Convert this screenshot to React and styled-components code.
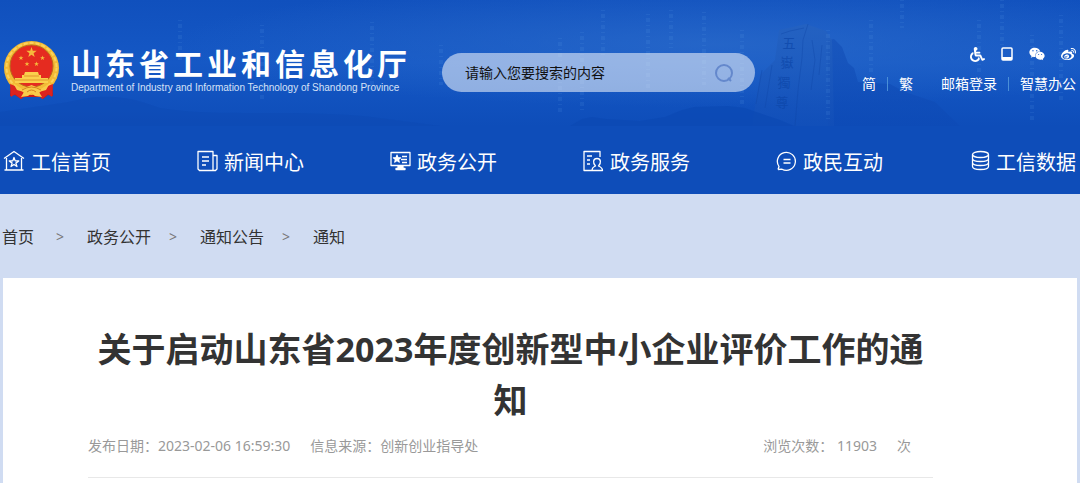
import React from "react";
import styled, { createGlobalStyle } from "styled-components";
import { FaWheelchair, FaWeixin, FaWeibo } from "react-icons/fa";

const GlobalStyle = createGlobalStyle`
  * { box-sizing: border-box; }
  body {
    margin: 0;
    background: #d0dcf2;
    color: #333;
    font-family: "Noto Sans", "Noto Sans CJK SC", sans-serif;
  }
  a { color: inherit; text-decoration: none; }
`;

const Header = styled.header`
  position: relative;
  background: #0e4db9;
  color: #fff;
`;

const Scene = styled.svg`
  position: absolute;
  top: 0;
  left: 0;
  width: 100%;
  height: 126px;
`;

const Masthead = styled.div`
  position: relative;
  display: flex;
  align-items: flex-start;
  height: 126px;
  padding: 40px 4px 0 3px;
`;

const Brand = styled.a`
  display: flex;
  gap: 11px;
`;

const Emblem = styled.svg`
  width: 57px;
  height: 61px;
`;

const BrandText = styled.div`
  padding-top: 7px;
  white-space: nowrap;
`;

const SiteName = styled.div`
  font-size: 30px;
  line-height: 34px;
  font-weight: 700;
  letter-spacing: 4px;
`;

const SiteNameEn = styled.div`
  font-family: "Liberation Sans", sans-serif;
  font-size: 10px;
  line-height: 14px;
  color: #d6e2f7;
`;

const Search = styled.form`
  display: flex;
  align-items: center;
  width: 313px;
  height: 39px;
  margin: 13px 0 0 31px;
  padding: 0 20px 0 23px;
  border-radius: 20px;
  background: rgba(255, 255, 255, 0.53);
`;

const SearchInput = styled.input`
  flex: 1;
  min-width: 0;
  padding: 0;
  border: 0;
  outline: 0;
  background: transparent;
  font: 14px/20px "Noto Sans", "Noto Sans CJK SC", sans-serif;
  &::placeholder { color: #111; opacity: 1; }
`;

const SearchButton = styled.button`
  display: flex;
  padding: 0;
  border: 0;
  background: none;
  color: #6488cc;
`;

const Tools = styled.div`
  display: flex;
  flex-direction: column;
  align-items: flex-end;
  gap: 11px;
  margin-left: auto;
  padding-top: 5px;
`;

const IconLinks = styled.div`
  display: flex;
  align-items: center;
  gap: 16px;
  height: 18px;
  a { display: flex; }
`;

const TextLinks = styled.div`
  display: flex;
  align-items: center;
  font-size: 14px;
  line-height: 20px;
  white-space: nowrap;
`;

const Divider = styled.span`
  width: 1px;
  height: 14px;
  margin: 0 11px;
  background: #4a8fd8;
`;

const LinkGroup = styled.div`
  display: flex;
  align-items: center;
  & + & { margin-left: 28px; }
`;

const Nav = styled.nav`
  position: relative;
  display: flex;
  justify-content: space-between;
  height: 68px;
  padding: 0 4px 0 3px;
`;

const NavItem = styled.a`
  display: flex;
  align-items: center;
  gap: 6px;
  height: 70px;
  font-size: 20px;
  white-space: nowrap;
`;

const Crumbs = styled.nav`
  display: flex;
  align-items: center;
  height: 84px;
  padding-left: 2px;
  font-size: 16px;
`;

const CrumbMark = styled.span`
  width: 49px;
  padding-left: 18px;
  font-size: 14px;
  color: #777;
  &:first-of-type { margin-left: 4px; }
`;

const Article = styled.main`
  min-height: 205px;
  margin: 0 3px;
  padding: 46px 144px 0 85px;
  background: #fff;
`;

const Title = styled.h1`
  margin: 0;
  font-size: 34px;
  line-height: 51px;
  font-weight: 700;
  text-align: center;
`;

const Meta = styled.div`
  display: flex;
  gap: 20px;
  padding: 9px 22px 20px 0;
  border-bottom: 1px solid #e8e8e8;
  font-size: 14px;
  line-height: 22px;
  color: #999;
`;

const Views = styled.span`
  display: flex;
  gap: 20px;
  margin-left: auto;
`;

const star = (cx, cy, r) =>
  Array.from({ length: 10 }, (_, i) => {
    const a = (Math.PI / 5) * i - Math.PI / 2;
    const q = i % 2 ? r * 0.4 : r;
    return (cx + q * Math.cos(a)).toFixed(2) + "," + (cy + q * Math.sin(a)).toFixed(2);
  }).join(" ");

const streams = [
  [180, 20, 60], [262, 25, 100], [372, 22, 90], [441, 45, 85], [560, 38, 112], [582, 32, 112],
  [603, 10, 55], [648, 14, 90], [671, 10, 48], [704, 12, 85], [742, 30, 105], [828, 30, 122],
  [871, 20, 75], [902, 0, 28], [979, 20, 75], [1002, 0, 45], [1032, 35, 122], [1061, 15, 100],
];

function HeaderScene() {
  return (
    <Scene viewBox="0 0 1080 126" preserveAspectRatio="xMidYMin slice" aria-hidden="true">
      <defs>
        <linearGradient id="sky" x1="0" y1="0" x2="0" y2="1">
          <stop offset="0" stopColor="#1050bd" />
          <stop offset="0.5" stopColor="#1558c5" />
          <stop offset="1" stopColor="#0e4db9" />
        </linearGradient>
        <radialGradient id="glow" cx="0.66" cy="0.35" r="0.5">
          <stop offset="0" stopColor="#2a6aca" stopOpacity="0.75" />
          <stop offset="1" stopColor="#2a6aca" stopOpacity="0" />
        </radialGradient>
        <linearGradient id="rock" x1="0" y1="0" x2="0" y2="1">
          <stop offset="0" stopColor="#2562c0" stopOpacity="0.8" />
          <stop offset="1" stopColor="#1350b9" stopOpacity="0.6" />
        </linearGradient>
        <linearGradient id="cliff" x1="0" y1="0" x2="0" y2="1">
          <stop offset="0" stopColor="#1551b9" />
          <stop offset="1" stopColor="#0d4ab6" />
        </linearGradient>
      </defs>
      <rect width="1080" height="126" fill="url(#sky)" />
      <rect width="1080" height="126" fill="url(#glow)" />
      <path d="M0 112C40 106 60 104 88 98C120 94 138 100 160 108C220 118 300 108 380 118L440 126H0Z" fill="#0c48b2" opacity="0.4" />
      <path d="M828 126V40L834 39L842 47L848 63L854 68L858 82L890 84L905 92L935 102L960 126Z" fill="url(#cliff)" opacity="0.7" />
      <path d="M752 126L760 75L775 60L779 30L806 24L826 31L832 40L834 126Z" fill="url(#rock)" />
      <path d="M808 24L803 40L802 58L798 90L795 126M781 34L790 31L804 28M772 65L765 108M762 70L756 104M812 40L815 60L811 90M822 45L819 75" fill="none" stroke="#0e47a8" strokeWidth="1" opacity="0.4" />
      <g fill="#0c46a9" opacity="0.7" fontFamily="Noto Sans CJK TC, sans-serif" fontSize="13" textAnchor="middle">
        <text x="789" y="48">五</text>
        <text x="787" y="67">嶽</text>
        <text x="784" y="87">獨</text>
        <text x="782" y="107">尊</text>
      </g>
      <path d="M570 126L582 119L592 117L606 119L640 121L665 117L682 110L694 107L728 106L745 108L762 114L780 120L794 126Z" fill="#0b49b3" opacity="0.7" />
      <g fill="none" stroke="#5a9be6" strokeWidth="4" strokeDasharray="1 3 4 3" opacity="0.14">
        {streams.map(([x, a, b]) => <path key={x} d={"M" + x + " " + a + "V" + b} />)}
      </g>
    </Scene>
  );
}

function NationalEmblem() {
  return (
    <Emblem viewBox="0 0 57 61" aria-hidden="true">
      <path d="M8 42L7 56L12 55L18 59L21 57H37L40 59L45 55L50 56L49 42Z" fill="#c81a18" />
      <ellipse cx="28.500" cy="28" rx="27.500" ry="27" fill="#f3ba35" />
      <ellipse cx="28.500" cy="27.500" rx="25" ry="24.500" fill="none" stroke="#fbd25c" strokeWidth="2" strokeDasharray="4 2" />
      <ellipse cx="28.500" cy="26" rx="21.500" ry="21" fill="#e52b20" stroke="#b96b1c" strokeWidth="1" />
      <g fill="#f6b93c">
        <polygon points={star(28.5, 12.5, 5.5)} />
        <polygon points={star(18, 18, 2.6)} />
        <polygon points={star(39.5, 18, 2.6)} />
        <polygon points={star(24, 24, 2.6)} />
        <polygon points={star(33.5, 24, 2.6)} />
      </g>
      <path d="M22 32H35L36 35H38V38H45V43H12V38H19V35H21Z" fill="#fad04c" />
      <path d="M21 36H36M12 40H45" stroke="#e0962a" strokeWidth="1" />
      <path d="M7 44L8 57L12 54L18 59L22 54L15 47ZM50 44L49 57L45 54L39 59L35 54L42 47Z" fill="#dc231e" />
      <path d="M10 43L19 49L28.500 45L38 49L47 43L43 50L36 52L39 57L32 56L28.500 53L25 56L18 57L21 52L14 50Z" fill="#f8cb4a" />
      <path d="M19 50Q28.500 44 38 50M24 52Q28.500 48 33 52" fill="none" stroke="#d6811f" strokeWidth="1" />
    </Emblem>
  );
}

const navIcons = {
  home: (
    <>
      <path d="M1 8.500L11 1.500L21 8.500M3.500 8V20M18.500 8V20M1.500 20H20.500" />
      <polygon points={star(11, 12.5, 5)} />
    </>
  ),
  news: <path d="M2 1.500H17V20.500H3.500L2 19ZM17 5.500H21V19L19.500 20.500H17M6 7H13M6 11H13M6 15H10" />,
  open: (
    <>
      <path d="M2 2.500H21V15.500H2ZM13 6.500H18M12 9.500H18M13 12.500H18" />
      <polygon points={star(8, 9, 3.8)} fill="currentColor" />
      <path d="M9 16.500H14V18.500H16V19.500H7V18.500H9Z" fill="currentColor" />
    </>
  ),
  service: <path d="M18 7V1.500H2V20.500H10M5 6H10M5 10H8M5 14H8M13.500 16C10.500 13 11 8.500 15 8.500S19.500 13 16.500 16C19 17 20.500 18 20.500 20.500H10C10 18 11 17 13.500 16Z" />,
  chat: <path d="M3 19.500L4 16.500A9 9 0 1 1 7 19.200L3 19.500M8.500 9.500H15.500M8.500 13H15.500" />,
  data: (
    <>
      <ellipse cx="12.500" cy="4.500" rx="8" ry="3" />
      <path d="M4.500 4.500V16.500C4.500 20.500 20.500 20.500 20.500 16.500V4.500M4.500 8.500C4.500 12.500 20.500 12.500 20.500 8.500M4.500 12.500C4.500 16.500 20.500 16.500 20.500 12.500" />
    </>
  ),
};

const navItems = [
  ["home", "工信首页"],
  ["news", "新闻中心"],
  ["open", "政务公开"],
  ["service", "政务服务"],
  ["chat", "政民互动"],
  ["data", "工信数据"],
];

const crumbs = ["首页", "政务公开", "通知公告", "通知"];

export default function App() {
  return (
    <>
      <GlobalStyle />
      <Header>
        <HeaderScene />
        <Masthead>
          <Brand href="#">
            <NationalEmblem />
            <BrandText>
              <SiteName>山东省工业和信息化厅</SiteName>
              <SiteNameEn>Department of Industry and Information Technology of Shandong Province</SiteNameEn>
            </BrandText>
          </Brand>
          <Search role="search">
            <SearchInput type="text" aria-label="搜索" placeholder="请输入您要搜索的内容" />
            <SearchButton type="button" aria-label="搜索">
              <svg width="22" height="22" viewBox="0 0 22 22" fill="none" stroke="currentColor" strokeWidth="2">
                <circle cx="11" cy="11" r="8" />
                <path d="M15 16L18 19" />
              </svg>
            </SearchButton>
          </Search>
          <Tools>
            <IconLinks>
              <a href="#" aria-label="无障碍"><FaWheelchair size={15} /></a>
              <a href="#" aria-label="移动版">
                <svg width="12" height="14" viewBox="0 0 12 14" fill="none" stroke="currentColor">
                  <rect x="1" y="1" width="10" height="12" rx="1" strokeWidth="1.500" />
                  <path d="M1 11.500H11" strokeWidth="3" />
                </svg>
              </a>
              <a href="#" aria-label="微信"><FaWeixin size={16} /></a>
              <a href="#" aria-label="微博"><FaWeibo size={15} /></a>
            </IconLinks>
            <TextLinks>
              <LinkGroup><a href="#">简</a><Divider /><a href="#">繁</a></LinkGroup>
              <LinkGroup><a href="#">邮箱登录</a><Divider /><a href="#">智慧办公</a></LinkGroup>
            </TextLinks>
          </Tools>
        </Masthead>
        <Nav>
          {navItems.map(([icon, label]) => (
            <NavItem href="#" key={icon}>
              <svg width="22" height="22" viewBox="0 0 22 22" fill="none" stroke="currentColor" strokeWidth="1.300" strokeLinejoin="round">
                {navIcons[icon]}
              </svg>
              {label}
            </NavItem>
          ))}
        </Nav>
      </Header>
      <Crumbs aria-label="当前位置">
        {crumbs.map((c, i) => (
          <React.Fragment key={c}>
            {i > 0 && <CrumbMark>&gt;</CrumbMark>}
            <a href="#">{c}</a>
          </React.Fragment>
        ))}
      </Crumbs>
      <Article>
        <Title>关于启动山东省2023年度创新型中小企业评价工作的通知</Title>
        <Meta>
          <span>发布日期：2023-02-06 16:59:30</span>
          <span>信息来源：创新创业指导处</span>
          <Views><span>浏览次数： 11903</span><span>次</span></Views>
        </Meta>
      </Article>
    </>
  );
}
